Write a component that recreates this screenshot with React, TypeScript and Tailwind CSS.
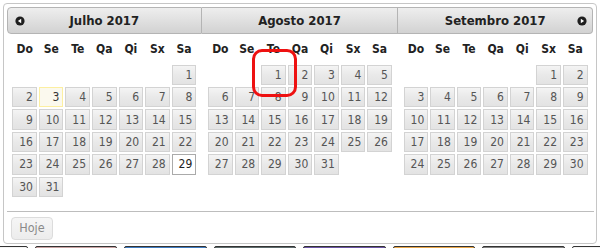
import React from "react";

type Cell = number | null;

const DAYS = ["Do", "Se", "Te", "Qa", "Qi", "Sx", "Sa"];

function buildMonth(startDow: number, len: number): Cell[] {
  const cells: Cell[] = [];
  for (let i = 0; i < startDow; i++) cells.push(null);
  for (let d = 1; d <= len; d++) cells.push(d);
  while (cells.length % 7 !== 0) cells.push(null);
  return cells;
}

const MONTHS = [
  { title: "Julho 2017", cells: buildMonth(6, 31), highlight: 3, active: 29 },
  { title: "Agosto 2017", cells: buildMonth(2, 31), highlight: -1, active: -1 },
  { title: "Setembro 2017", cells: buildMonth(5, 30), highlight: -1, active: -1 },
];

function PrevIcon() {
  return (
    <svg width="12" height="12" viewBox="0 0 12 12">
      <circle cx="6" cy="6" r="4.6" fill="#1f1f1f" />
      <path d="M3.9 6 L7.2 3.8 L7.2 8.2 Z" fill="#ffffff" />
    </svg>
  );
}

function NextIcon() {
  return (
    <svg width="12" height="12" viewBox="0 0 12 12">
      <circle cx="6" cy="6" r="4.6" fill="#1f1f1f" />
      <path d="M8.1 6 L4.8 3.8 L4.8 8.2 Z" fill="#ffffff" />
    </svg>
  );
}

function DayCell({ value, highlight, active }: { value: Cell; highlight: boolean; active: boolean }) {
  if (value === null) return <div className="p-[1px]" />;
  let cls =
    "border-[#d3d3d3] bg-gradient-to-b from-[#f4f4f4] via-[#e9e9e9] to-[#e3e3e3] text-[#555555]";
  if (highlight) cls = "border-[#fcefa1] bg-[#fbf9ee] text-[#363636]";
  if (active) cls = "border-[#aaaaaa] bg-white text-[#212121]";
  return (
    <div className="p-[1px]">
      <div
        className={`h-full border ${cls} flex items-center justify-end pr-[3px] text-[12px] leading-none`}
      >
        {value}
      </div>
    </div>
  );
}

function MonthGroup({
  idx,
  title,
  cells,
  highlight,
  active,
}: {
  idx: number;
  title: string;
  cells: Cell[];
  highlight: number;
  active: number;
}) {
  const headerShape =
    idx === 0
      ? "border rounded-l-[4px]"
      : idx === 2
      ? "border border-l-0 rounded-r-[4px]"
      : "border border-l-0";
  return (
    <div className="w-1/3 flex flex-col">
      <div
        className={`relative h-[27px] ${headerShape} border-[#b4b4b4] bg-gradient-to-b from-[#eeeeee] via-[#e0e0e0] to-[#d2d2d2] flex items-center justify-center`}
      >
        {idx === 0 && (
          <div className="absolute left-[6px] top-[7px]">
            <PrevIcon />
          </div>
        )}
        {idx === 2 && (
          <div className="absolute right-[4px] top-[7px]">
            <NextIcon />
          </div>
        )}
        <span className="font-bold text-[13px] text-[#222222] leading-none">{title}</span>
      </div>
      <div className="w-[95%] mx-auto">
        <div className="grid grid-cols-7 h-[30px] items-center">
          {DAYS.map((d) => (
            <div key={d} className="text-center font-bold text-[12px] text-[#222222] leading-none">
              {d}
            </div>
          ))}
        </div>
        <div className="grid grid-cols-7 auto-rows-[22.45px]">
          {cells.map((c, i) => (
            <DayCell key={i} value={c} highlight={c === highlight} active={c === active} />
          ))}
        </div>
      </div>
    </div>
  );
}

const BARS = [
  "bg-[#f4f4f4]",
  "bg-[#c9a3a3]",
  "bg-[#3e7cc2]",
  "bg-[#5f6d6e]",
  "bg-[#6c55a6]",
  "bg-[#eaa748]",
  "bg-[#828282]",
  "bg-[#f4f4f4]",
];

export default function App() {
  return (
    <div
      className="relative w-[600px] h-[248px] overflow-hidden bg-white pt-[3px] pl-[3px]"
      style={{ fontFamily: "'DejaVu Sans Condensed', 'DejaVu Sans', sans-serif" }}
    >
      <div className="w-[594px] h-[241px] border border-[#c6c6c6] rounded-[4px] bg-white px-[2.5px] pt-[2.5px] flex flex-col">
        <div className="flex items-start h-[192px]">
          {MONTHS.map((m, i) => (
            <MonthGroup key={m.title} idx={i} {...m} />
          ))}
        </div>
        <div className="mt-[12.5px] border-t border-[#bdbdbd] px-[2.4px]">
          <button className="mt-[5px] ml-[2.4px] h-[23px] px-[7px] border border-[#dcdcdc] rounded-[4px] bg-gradient-to-b from-[#f6f6f6] to-[#ececec] text-[#8a8a8a] text-[12.5px] leading-none">
            Hoje
          </button>
        </div>
      </div>
      <div className="flex gap-[7px] ml-[-58px] mt-[2px]">
        {BARS.map((b, i) => (
          <div key={i} className={`shrink-0 w-[82.5px] h-[12px] border border-[#333333] rounded-t-[2px] ${b}`} />
        ))}
      </div>
      <div className="absolute left-[252px] top-[49px] w-[45px] h-[48px] border-[3px] border-[#ee1111] rounded-[10px]" />
    </div>
  );
}
